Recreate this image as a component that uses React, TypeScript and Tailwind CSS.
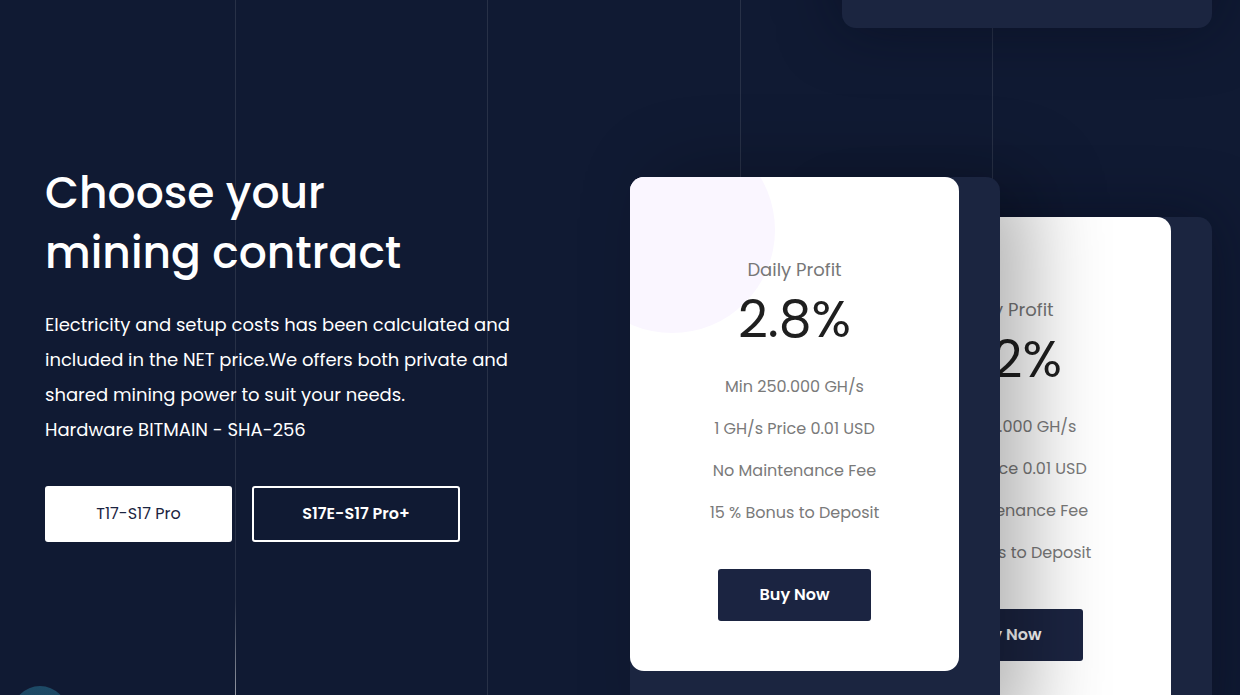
import React from "react";

const font = "font-['Poppins','Open_Sans',sans-serif]";

interface Plan {
  profit: string;
  min: string;
}

function PlanCard({ plan, showCircle }: { plan: Plan; showCircle?: boolean }) {
  return (
    <div className="relative h-[494px] w-[329px] overflow-hidden rounded-[14px] bg-white">
      {showCircle && (
        <div className="absolute left-[-61px] top-[-50px] h-[206px] w-[206px] rounded-full bg-[#faf6ff]" />
      )}
      <div className="relative flex flex-col items-center pt-[80px] text-center">
        <p className="text-[18px] leading-[26px] text-[#777]">Daily Profit</p>
        <p className="mt-[8px] text-[52px] leading-[56px] text-[#1f1f1f]">{plan.profit}</p>
        <ul className="mt-[28px] flex flex-col gap-[18px] text-[16px] leading-[24px] text-[#7a7a7a]">
          <li>{plan.min}</li>
          <li>1 GH/s Price 0.01 USD</li>
          <li>No Maintenance Fee</li>
          <li>15 % Bonus to Deposit</li>
        </ul>
        <button className="mt-[44px] h-[52px] w-[153px] rounded-[3px] bg-[#1b2441] text-[16px] font-semibold text-white">
          Buy Now
        </button>
      </div>
    </div>
  );
}

export default function App() {
  return (
    <div className={`relative h-[695px] w-full overflow-hidden bg-[#101a33] ${font}`}>
      {/* Grid lines */}
      <div className="pointer-events-none absolute inset-0 flex">
        <div className="w-[235px]" />
        <div className="w-[252px] border-l border-white/10" />
        <div className="w-[253px] border-l border-white/10" />
        <div className="w-[252px] border-l border-white/10" />
        <div className="flex-1 border-l border-white/10" />
      </div>
      <div className="pointer-events-none absolute left-[235px] top-[600px] h-[95px] w-px bg-gradient-to-b from-transparent to-white/50" />

      <div className="relative flex h-full">
        {/* Left copy */}
        <div className="w-[630px] pl-[45px] pt-[163px]">
          <h1 className="text-[44px] font-medium leading-[60px] text-white">
            Choose your
            <br />
            mining contract
          </h1>
          <p className="mt-[24px] w-[480px] text-[18px] leading-[35px] text-white">
            Electricity and setup costs has been calculated and included in the NET price.We offers both
            private and shared mining power to suit your needs.
            <br />
            Hardware BITMAIN - SHA-256
          </p>
          <div className="mt-[39px] flex gap-[20px]">
            <button className="h-[56px] w-[187px] rounded-[3px] bg-white text-[16px] text-[#1b2441]">
              T17-S17 Pro
            </button>
            <button className="h-[56px] w-[208px] rounded-[3px] border-2 border-white text-[16px] font-semibold text-white">
              S17E-S17 Pro+
            </button>
          </div>
        </div>

        {/* Card stack */}
        <div className="relative flex-1">
          <div className="absolute left-[212px] top-[-466px] h-[494px] w-[370px] rounded-[14px] bg-[#1b2540] shadow-[0_0_60px_rgba(5,10,25,0.5)]" />
          <div className="absolute left-[212px] top-[217px] h-[520px] w-[370px] rounded-[14px] bg-[#1b2540] shadow-[0_0_60px_rgba(5,10,25,0.5)]">
            <PlanCard plan={{ profit: "3.2%", min: "Min 500.000 GH/s" }} />
          </div>
          <div className="absolute left-0 top-[177px] h-[560px] w-[370px] rounded-[14px] bg-[#1b2540] shadow-[30px_0_80px_rgba(0,0,0,0.3)]">
            <PlanCard plan={{ profit: "2.8%", min: "Min 250.000 GH/s" }} showCircle />
          </div>
        </div>
      </div>

      {/* Scroll button peeking in */}
      <div className="absolute left-[12px] top-[686px] h-[56px] w-[56px] rounded-full bg-gradient-to-b from-[#1d4a66] to-[#1a3f5c]" />
    </div>
  );
}
